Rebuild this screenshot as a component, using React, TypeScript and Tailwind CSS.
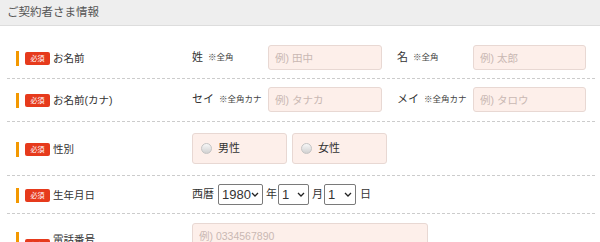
import React from "react";

const FONT = "font-['Liberation_Sans','Noto_Sans_CJK_JP',sans-serif]";

function Label({
  text,
  className = "",
  badgeClass = "",
}: {
  text: string;
  className?: string;
  badgeClass?: string;
}) {
  return (
    <div className={`w-[185px] shrink-0 flex items-center pl-[9px] ${className}`}>
      <span className="w-[3px] h-[15px] bg-[#f39800] shrink-0" />
      <span
        className={`ml-[6px] w-[25px] h-[13px] rounded-[2px] bg-[#e63a1c] text-white text-[7px] leading-none flex items-center justify-center shrink-0 ${badgeClass}`}
      >
        必須
      </span>
      <span className="ml-[3px] text-[10.5px] leading-none text-[#333]">{text}</span>
    </div>
  );
}

function TextInput({ placeholder, w }: { placeholder: string; w: string }) {
  return (
    <input
      readOnly
      placeholder={placeholder}
      className={`${w} h-[25px] rounded-[3px] border border-[#e8d8d3] bg-[#fdefea] px-[6px] text-[10.5px] text-[#333] outline-none placeholder:text-[#c9b8b3] ${FONT}`}
    />
  );
}

function FieldLabel({ main, note }: { main: string; note: string }) {
  return (
    <div className="w-[76px] shrink-0 flex items-center text-[#333]">
      <span className="text-[11px] leading-none">{main}</span>
      <span className="ml-[5px] text-[8.5px] leading-none text-[#444]">{note}</span>
    </div>
  );
}

function Chevron() {
  return (
    <svg width="8" height="5" viewBox="0 0 8 5" className="shrink-0">
      <path d="M1 1 L4 4 L7 1" fill="none" stroke="#222" strokeWidth="1.3" />
    </svg>
  );
}

function Select({ value, w }: { value: string; w: string }) {
  return (
    <div
      className={`${w} h-[21px] rounded-[2px] border border-[#7a7a7a] bg-white flex items-center justify-between pl-[3px] pr-[3px] text-[13px] leading-none text-[#333]`}
    >
      <span>{value}</span>
      <Chevron />
    </div>
  );
}

function Radio({ text }: { text: string }) {
  return (
    <div className="w-[95px] h-[31px] rounded-[3px] border border-[#e8d8d3] bg-[#fdefea] flex items-center pl-[8px]">
      <span className="w-[11px] h-[11px] rounded-full border border-[#c4c4c4] bg-linear-to-b from-[#f7f7f7] to-[#d2d2d2]" />
      <span className="ml-[6px] text-[11px] leading-none text-[#333]">{text}</span>
    </div>
  );
}

export default function App() {
  return (
    <div className={`w-[600px] h-[242px] overflow-hidden bg-white ${FONT}`}>
      <div className="h-[26px] bg-[#eeeeee] border-b border-[#dddddd] flex items-center pl-[7px]">
        <span className="text-[11.5px] leading-none text-[#555]">ご契約者さま情報</span>
      </div>

      <div className="pl-[7px] pr-[5px] pt-[11px]">
        {/* お名前 */}
        <div className="flex items-center py-[8px] border-b border-dashed border-[#cccccc]">
          <Label text="お名前" className="mt-[2px]" />
          <div className="flex items-center">
            <FieldLabel main="姓" note="※全角" />
            <TextInput placeholder="例) 田中" w="w-[114px]" />
            <div className="ml-[15px] flex items-center">
              <FieldLabel main="名" note="※全角" />
              <TextInput placeholder="例) 太郎" w="w-[113px]" />
            </div>
          </div>
        </div>

        {/* お名前(カナ) */}
        <div className="flex items-center pt-[8px] pb-[9px] border-b border-dashed border-[#cccccc]">
          <Label text="お名前(カナ)" className="mt-[2px]" />
          <div className="flex items-center">
            <FieldLabel main="セイ" note="※全角カナ" />
            <TextInput placeholder="例) タナカ" w="w-[114px]" />
            <div className="ml-[15px] flex items-center">
              <FieldLabel main="メイ" note="※全角カナ" />
              <TextInput placeholder="例) タロウ" w="w-[113px]" />
            </div>
          </div>
        </div>

        {/* 性別 */}
        <div className="flex items-center pt-[11px] pb-[11px] border-b border-dashed border-[#cccccc]">
          <Label text="性別" className="mt-[2px]" />
          <div className="flex items-center gap-[5px]">
            <Radio text="男性" />
            <Radio text="女性" />
          </div>
        </div>

        {/* 生年月日 */}
        <div className="flex items-center py-[8px] border-b border-dashed border-[#cccccc]">
          <Label text="生年月日" className="mt-[2px]" />
          <div className="flex items-center text-[11px] leading-none text-[#333]">
            <span className="mr-[4px]">西暦</span>
            <Select value="1980" w="w-[45px]" />
            <span className="ml-[3px] mr-[1px]">年</span>
            <Select value="1" w="w-[31px]" />
            <span className="ml-[3px] mr-[1px]">月</span>
            <Select value="1" w="w-[32px]" />
            <span className="ml-[4px]">日</span>
          </div>
        </div>

        {/* 電話番号 */}
        <div className="flex items-start pt-[9px] pb-[9px]">
          <Label text="電話番号" className="pt-[9px]" badgeClass="translate-y-[6px]" />
          <div className="flex flex-col">
            <TextInput placeholder="例) 0334567890" w="w-[236px]" />
          </div>
        </div>
      </div>
    </div>
  );
}
